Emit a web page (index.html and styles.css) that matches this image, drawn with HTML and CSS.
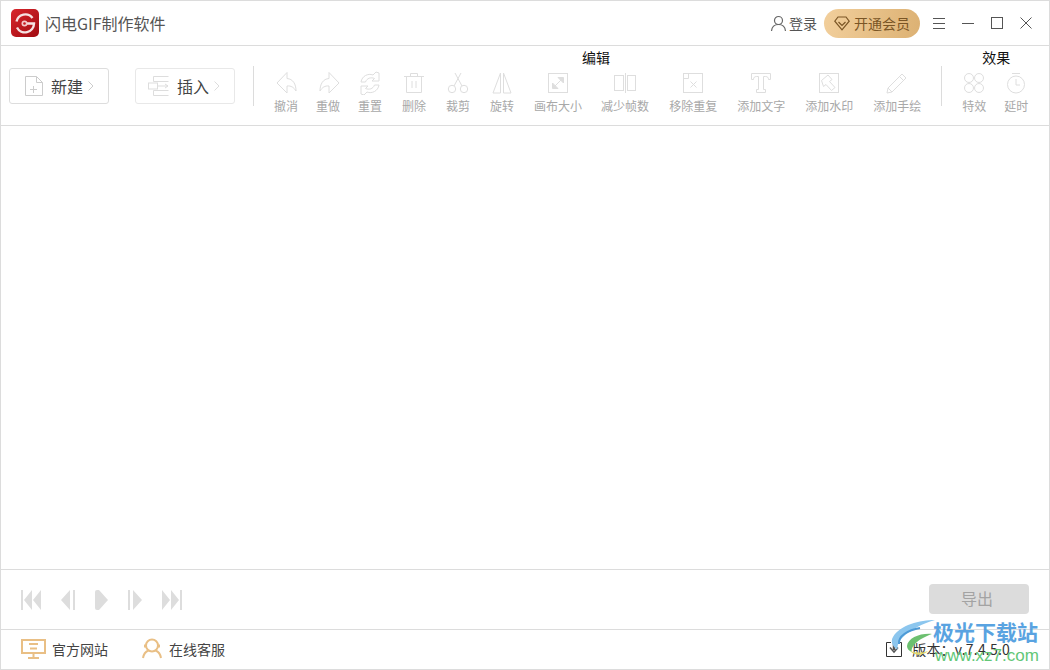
FILE: index.html
```html
<!doctype html>
<html lang="zh-CN">
  <head>
    <meta charset="UTF-8">
    <title>闪电GIF制作软件</title>
    <link rel="stylesheet" href="styles.css">
  </head>
  <body>
    <div class="window">
      <!-- Title bar -->
      <div class="titlebar">
        <svg class="logo" viewBox="0 0 28 28">
          <defs>
            <linearGradient id="logo-red" x1="0%" y1="0%" x2="100%" y2="100%">
              <stop offset="0%" stop-color="#d8262c"/>
              <stop offset="100%" stop-color="#a10c12"/>
            </linearGradient>
          </defs>
          <rect width="28" height="28" rx="5" fill="url(#logo-red)"/>
          <path d="M5.5 12.5A9 9 0 0 1 21.5 9" fill="none" stroke="#f6e3e3" stroke-width="2.4"/>
          <path d="M6 18.5A9 9 0 0 0 23 14.5H16" fill="none" stroke="#f6e3e3" stroke-width="2.4"/>
          <circle cx="13.5" cy="14.5" r="3" fill="#f3c9c9"/>
          <circle cx="13.5" cy="14.5" r="1.3" fill="#c8181f"/>
        </svg>
        <span class="app-title">闪电GIF制作软件</span>
        <div class="title-right">
          <a class="login">
            <svg width="17" height="17" viewBox="0 0 17 17" fill="none" stroke="#666" stroke-width="1.2">
              <circle cx="8.5" cy="5.5" r="4"/>
              <path d="M1.5 16c.4-4 3.2-6.5 7-6.5s6.6 2.5 7 6.5"/>
            </svg>
            登录
          </a>
          <a class="vip">
            <svg width="16" height="15" viewBox="0 0 16 15" fill="none" stroke="#7a5525" stroke-width="1.2">
              <path d="M4 1h8l3.2 4.2L8 13.8.8 5.2z"/>
              <path d="M4.5 6 8 9.5 11.5 6"/>
            </svg>
            开通会员
          </a>
          <div class="win-buttons">
            <svg viewBox="0 0 12 12" stroke="#555" fill="none"><path d="M0 1.5h12M0 6.5h12M0 11.5h12"/></svg>
            <svg viewBox="0 0 12 12" stroke="#555" fill="none"><path d="M0 6.5h12"/></svg>
            <svg viewBox="0 0 12 12" stroke="#555" fill="none"><rect x=".5" y=".5" width="11" height="11"/></svg>
            <svg viewBox="0 0 12 12" stroke="#555" fill="none"><path d="M.5.5l11 11M11.5.5l-11 11"/></svg>
          </div>
        </div>
      </div>

      <!-- Toolbar -->
      <div class="toolbar">
        <a class="big-btn">
          <svg width="18" height="20" viewBox="0 0 18 20" fill="none" stroke="#ccc">
            <path d="M.5.5h11l6 6v13H.5z"/><path d="M11.5.5v6h6"/><path d="M5 13.5h7M8.5 10v7"/>
          </svg>
          <span>新建</span>
          <svg class="chev" width="6" height="10" viewBox="0 0 6 10" fill="none" stroke="#ccc"><path d="M.5.5 5 5 .5 9.5"/></svg>
        </a>
        <a class="big-btn insert">
          <svg width="21" height="20" viewBox="0 0 21 20" fill="none" stroke="#ddd">
            <path d="M5.5.5h15M5.5 5.5h15M5.5 14.5h15M5.5 19.5h15M5.5.5v5M5.5 14.5v5"/>
            <rect x=".5" y="7" width="9" height="6"/><path d="M10 10h10M17 8l3 2-3 2"/>
          </svg>
          <span>插入</span>
          <svg class="chev" width="6" height="10" viewBox="0 0 6 10" fill="none" stroke="#ddd"><path d="M.5.5 5 5 .5 9.5"/></svg>
        </a>
        <div class="divider first"></div>

        <div class="tool-group">
          <div class="group-title">编辑</div>
          <div class="tools">
            <a class="tool tight">
              <svg viewBox="0 0 24 24"><path d="M13 1.5 3 12l10 10v-7c4-.5 7 1.5 9 5 0-7-3-12-9-12.5z"/></svg>
              <span>撤消</span>
            </a>
            <a class="tool tight">
              <svg viewBox="0 0 24 24"><path d="M13 1.5 23 12 13 22v-7c-4-.5-7 1.5-9 5 0-7 3-12 9-12.5z"/></svg>
              <span>重做</span>
            </a>
            <a class="tool">
              <svg viewBox="0 0 24 24"><path d="M3 11C4 5 10 2 15 4l3-3 3 1v8h-7l2.500-2.500C13 6 9 7 7.500 11z"/><path d="M21 14c-1 6-7 9-12 7l-3 3-3-1v-8h7l-2.500 2.500C11 19 15 18 16.500 14z"/></svg>
              <span>重置</span>
            </a>
            <a class="tool">
              <svg viewBox="0 0 24 24"><path d="M2 5.5h20M8.5 5.5v-3h7v3M4.5 5.5v16h15v-16M10 10v7M14 10v7"/></svg>
              <span>删除</span>
            </a>
            <a class="tool">
              <svg viewBox="0 0 24 24"><circle cx="6" cy="18" r="3.7"/><circle cx="18" cy="18" r="3.7"/><path d="M8 15 15 2M16 15 9 2"/></svg>
              <span>裁剪</span>
            </a>
            <a class="tool">
              <svg viewBox="0 0 24 24"><path d="M10.5 2v20H3zM13.5 2v20H21z"/></svg>
              <span>旋转</span>
            </a>
            <a class="tool size">
              <svg viewBox="0 0 24 24"><rect x="2.5" y="2.5" width="19" height="19"/><path d="M8 16l8-8"/><path class="solid" d="M12 6.5h5.500V12zM6.500 12v5.500H12z"/></svg>
              <span>画布大小</span>
            </a>
            <a class="tool">
              <svg viewBox="0 0 24 24"><rect x="1.5" y="4.5" width="9" height="15"/><rect x="14.5" y="4.5" width="8" height="15"/><path d="M12.5 2v20"/></svg>
              <span>减少帧数</span>
            </a>
            <a class="tool">
              <svg viewBox="0 0 24 24"><rect x="2.5" y="2.5" width="19" height="19"/><path d="M2.5 7.5h5v-5M9.5 10.5l6 6M15.5 10.5l-6 6"/></svg>
              <span>移除重复</span>
            </a>
            <a class="tool">
              <svg viewBox="0 0 24 24"><path d="M2.5 2.5h19v6h-2c0-2-1-3-3-3h-2v13h2v3h-9v-3h2v-13h-2c-2 0-3 1-3 3h-2z"/></svg>
              <span>添加文字</span>
            </a>
            <a class="tool">
              <svg viewBox="0 0 24 24"><rect x="2.5" y="2.5" width="19" height="19"/><path d="M4.5 9.500 11 4l4 4.500-2.500 2 5.500 6-3.500 3-5.500-6-2.500 2z"/></svg>
              <span>添加水印</span>
            </a>
            <a class="tool">
              <svg viewBox="0 0 24 24"><path d="M3 17 17 3l4 4L7 21l-5 1zM14.5 5.5l4 4M3 17l4 4"/></svg>
              <span>添加手绘</span>
            </a>
          </div>
        </div>
        <div class="divider"></div>

        <div class="tool-group effects-group">
          <div class="group-title">效果</div>
          <div class="tools effects">
            <a class="tool">
              <svg viewBox="0 0 24 24"><circle cx="7" cy="7" r="4.5"/><circle cx="17" cy="7" r="4.5"/><circle cx="7" cy="17" r="4.5"/><circle cx="17" cy="17" r="4.5"/></svg>
              <span>特效</span>
            </a>
            <a class="tool">
              <svg viewBox="0 0 24 24"><circle cx="12" cy="13.5" r="8.5"/><path d="M8 2.5h8M12 8v6h4"/></svg>
              <span>延时</span>
            </a>
          </div>
        </div>
      </div>

      <div class="canvas"></div>

      <!-- Player controls -->
      <div class="player">
        <div class="player-btns">
          <svg width="20" height="20" viewBox="0 0 20 20"><path d="M0 0h2v20H0zM11 0v20L3 10zM20 0v20l-8-10z"/></svg>
          <svg width="14" height="20" viewBox="0 0 14 20"><path d="M9 0v20L0 10zM12 0h2v20h-2z"/></svg>
          <svg width="13" height="20" viewBox="0 0 13 20"><path d="M2 0h2l9 10-9 10H2q-2 0-2-2V2q0-2 2-2z"/></svg>
          <svg width="14" height="20" viewBox="0 0 14 20"><path d="M0 0h2v20H0zM5 0l9 10-9 10z"/></svg>
          <svg width="20" height="20" viewBox="0 0 20 20"><path d="M0 0l8 10-8 10zM9 0l8 10-8 10zM18 0h2v20h-2z"/></svg>
        </div>
        <a class="export-btn">导出</a>
      </div>

      <!-- Footer -->
      <div class="footer">
        <a class="foot-link site">
          <svg width="25" height="20" viewBox="0 0 25 20" fill="none" stroke="#e9bf85" stroke-width="2">
            <rect x="1" y="1" width="23" height="13"/><path d="M8 5h9M9 9.5h7M12.5 14v4M7 19h11"/>
          </svg>
          官方网站
        </a>
        <a class="foot-link">
          <svg width="20" height="21" viewBox="0 0 20 21" fill="none" stroke="#e9bf85" stroke-width="2">
            <circle cx="10" cy="7.5" r="6"/><path d="M1 20c.6-4 3-6.500 5.500-7.500M19 20c-.6-4-3-6.500-5.500-7.500M3 6.500v3M17 6.500v3"/>
          </svg>
          在线客服
        </a>
        <div class="version">
          <svg width="16" height="17" viewBox="0 0 16 17" fill="none" stroke="#333">
            <path d="M5 2.5H.5v14h15v-14H11"/>
            <path d="M8 0v10" stroke="#555" stroke-width="2.5"/>
            <path d="M4 7.5l4 4.500 4-4.500" stroke="#555" stroke-width="1.5"/>
          </svg>
          <span>版本：v.7.4.5.0</span>
        </div>
      </div>

      <!-- Download site watermark -->
      <div class="watermark">
        <svg class="swoosh" width="46" height="44" viewBox="0 0 46 44">
          <path d="M45 0C30 0 10 5 3 17c-3 5 0 10 5 13C5 22 18 8 45 0z" fill="#8cc6ee"/>
          <path d="M30 8C18 10 8 16 9 24" fill="none" stroke="#4d9ad6" stroke-width="2"/>
          <path d="M42 14c-12-1-24 4-25 12 0 3 2 5 5 6-2-6 8-14 20-18z" fill="#6cc070"/>
          <path d="M20 31c5 5 13 5 18 0-6 2-12 2-18 0z" fill="#e3da6e"/>
        </svg>
        <div class="wm-name">极光下载站</div>
        <div class="wm-url">www.xz7.com</div>
      </div>
    </div>
  </body>
</html>
```

FILE: styles.css
```css
:root {
  --line-color: #dcdcdc;
  --icon-color: #dedede;
  --label-color: #a8a8a8;
}
body {
  margin: 0;
  padding: 0;
  background: #fff;
  font-family: "Noto Sans CJK SC", "Noto Sans", sans-serif;
  color: #444;
}
.window {
  position: relative;
  box-sizing: border-box;
  width: 1050px;
  height: 670px;
  border: 1px solid var(--line-color);
  display: flex;
  flex-direction: column;
  overflow: hidden;
}
/* Title bar */
.titlebar {
  height: 44px;
  border-bottom: 1px solid var(--line-color);
  display: flex;
  align-items: center;
  padding: 0 17px 0 10px;
}
.logo {
  width: 28px;
  height: 28px;
  margin-right: 6px;
}
.app-title {
  font-size: 16px;
  color: #555;
}
.title-right {
  margin-left: auto;
  display: flex;
  align-items: center;
}
.login {
  display: flex;
  align-items: center;
  gap: 2px;
  font-size: 14px;
  color: #555;
}
.vip {
  display: flex;
  align-items: center;
  gap: 4px;
  height: 29px;
  width: 96px;
  box-sizing: border-box;
  padding-left: 10px;
  margin-left: 7px;
  border-radius: 15px;
  background: linear-gradient(100deg, #f2cf9c, #dcb173);
  font-size: 14px;
  color: #7a5525;
}
.win-buttons {
  display: flex;
  align-items: center;
  gap: 17px;
  margin-left: 13px;
}
.win-buttons svg {
  width: 12px;
  height: 12px;
}
/* Toolbar */
.toolbar {
  height: 79px;
  border-bottom: 1px solid var(--line-color);
  display: flex;
  align-items: flex-start;
  padding-left: 8px;
}
.big-btn {
  box-sizing: border-box;
  width: 100px;
  height: 36px;
  margin-top: 22px;
  border: 1px solid #ddd;
  border-radius: 3px;
  display: flex;
  align-items: center;
  padding-left: 15px;
  font-size: 16px;
  color: #444;
}
.big-btn span {
  margin-left: 8px;
}
.big-btn .chev {
  margin-left: 5px;
}
.big-btn.insert {
  margin-left: 26px;
  border-color: #e8e8e8;
  padding-left: 12px;
}
.divider {
  width: 1px;
  height: 40px;
  margin: 20px 20px 0;
  background: var(--line-color);
}
.divider.first {
  margin-left: 18px;
}
.tool-group {
  display: flex;
  flex-direction: column;
  align-items: center;
}
.group-title {
  margin: 2px 3px 0 0;
  height: 18px;
  line-height: 18px;
  font-size: 14px;
  color: #111;
}
.effects-group .group-title {
  margin: 2px 0 0 2px;
}
.tools {
  display: flex;
  gap: 20px;
  margin-top: 5px;
}
.tools.effects {
  gap: 18px;
}
.tool {
  display: flex;
  flex-direction: column;
  align-items: center;
  font-size: 12px;
  line-height: 16px;
  color: var(--label-color);
  white-space: nowrap;
}
.tool.tight {
  margin-right: -2px;
}
.tool.size {
  margin-right: -1px;
}
.tool svg {
  width: 24px;
  height: 24px;
  margin-bottom: 3px;
  fill: none;
  stroke: var(--icon-color);
  stroke-width: 1;
}
.tool svg .solid {
  fill: var(--icon-color);
}
.canvas {
  flex: 1;
  border-bottom: 1px solid var(--line-color);
}
/* Player */
.player {
  height: 59px;
  border-bottom: 1px solid var(--line-color);
  display: flex;
  align-items: center;
  justify-content: space-between;
  padding: 0 20px;
}
.player-btns {
  display: flex;
  align-items: center;
  gap: 20px;
}
.player-btns svg {
  fill: #ddd;
  display: block;
}
.export-btn {
  box-sizing: border-box;
  width: 100px;
  height: 30px;
  line-height: 29px;
  margin-bottom: 2px;
  padding-right: 4px;
  text-align: center;
  border-radius: 4px;
  background: #dcdcdc;
  color: #a3a3a3;
  font-size: 16px;
}
/* Footer */
.footer {
  box-sizing: border-box;
  height: 39px;
  display: flex;
  align-items: center;
  padding: 0 39px 2px 20px;
  font-size: 14px;
  color: #444;
}
.foot-link {
  display: flex;
  align-items: center;
  gap: 7px;
}
.foot-link.site {
  gap: 6px;
  margin-right: 34px;
}
.version {
  margin-left: auto;
  display: flex;
  align-items: center;
  gap: 10px;
  color: #333;
  letter-spacing: 0.2px;
}
/* Watermark, lies over the footer */
.watermark {
  position: absolute;
  right: 0;
  bottom: 0;
  width: 160px;
  height: 50px;
  pointer-events: none;
}
.swoosh {
  position: absolute;
  left: 1px;
  top: 1px;
}
.wm-name {
  position: absolute;
  left: 44px;
  top: -1px;
  font-size: 21px;
  line-height: 26px;
  font-weight: 700;
  color: #3d94dc;
  opacity: 0.85;
  white-space: nowrap;
}
.wm-url {
  position: absolute;
  left: 46px;
  top: 26px;
  font-family: "Liberation Sans", sans-serif;
  font-size: 17px;
  line-height: 22px;
  color: #63c777;
  white-space: nowrap;
}
```
